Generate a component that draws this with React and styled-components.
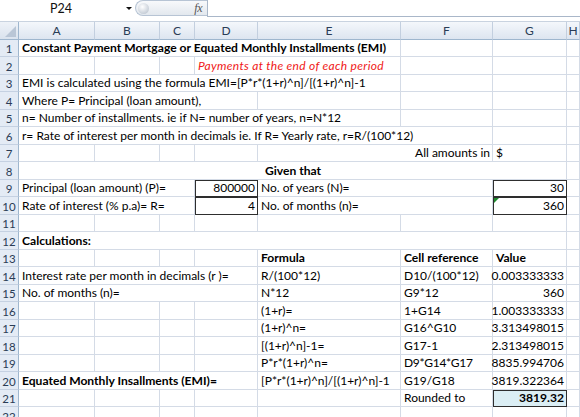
import React from "react";
import styled, { createGlobalStyle, css } from "styled-components";

const GlobalStyle = createGlobalStyle`
  html, body {
    margin: 0;
    padding: 0;
    background: #ffffff;
  }
  body {
    font-family: Lato, "Liberation Sans", sans-serif;
    overflow: hidden;
  }
`;

const COLS = "19px 76px 65px 35px 63px 143px 92px 74px 1fr";
const LETTERS = ["A", "B", "C", "D", "E", "F", "G", "H"];

const Window = styled.div`
  width: 580px;
  height: 417px;
  overflow: hidden;
  background: #fff;
`;

const TopBar = styled.div`
  display: flex;
  align-items: flex-start;
  height: 21px;
  background: #fff;
`;

const NameBox = styled.div`
  width: 122px;
  height: 17px;
  display: flex;
  align-items: center;
  justify-content: center;
  font-size: 12.5px;
  color: #111;
`;

const DropArrow = styled.div`
  width: 13px;
  height: 17px;
  display: flex;
  align-items: center;
  justify-content: center;
  &::after {
    content: "";
    border-left: 3px solid transparent;
    border-right: 3px solid transparent;
    border-top: 3px solid #111;
  }
`;

const FxPill = styled.div`
  width: 72px;
  height: 16px;
  box-sizing: border-box;
  display: flex;
  align-items: center;
  justify-content: space-between;
  padding: 0 5px 0 2px;
  border: 1px solid #b7c4d4;
  border-right: none;
  border-radius: 9px 0 0 9px;
  background: linear-gradient(#f8f9fb, #e3e8ee);
`;

const PillKnob = styled.div`
  width: 11px;
  height: 11px;
  border-radius: 50%;
  background: radial-gradient(circle at 40% 35%, #ffffff, #c9d0d9 70%, #aab3bf);
`;

const FxLabel = styled.span`
  font-family: "Liberation Serif", serif;
  font-style: italic;
  font-size: 12px;
  color: #555;
  letter-spacing: -0.5px;
`;

const FormulaInput = styled.div`
  flex: 1;
  height: 17px;
  box-sizing: border-box;
  border-left: 1px solid #a9b7c9;
  border-bottom: 1px solid #a9b7c9;
  background: #fff;
`;

const Grid = styled.div`
  display: flex;
  flex-direction: column;
`;

const Row = styled.div`
  display: grid;
  grid-template-columns: ${COLS};
  height: ${(p) => p.$h}px;
`;

const HeadRow = styled(Row)`
  border-top: 1px solid #c9d3e0;
  box-sizing: border-box;
`;

const Corner = styled.div`
  position: relative;
  background: linear-gradient(#eef2f8, #dae3ee);
  border-right: 1px solid #9eb6ce;
  border-bottom: 1px solid #9eb6ce;
  &::after {
    content: "";
    position: absolute;
    right: 2px;
    bottom: 2px;
    border-left: 11px solid transparent;
    border-bottom: 11px solid #b9c6d6;
  }
`;

const ColHead = styled.div`
  display: flex;
  align-items: center;
  justify-content: center;
  background: linear-gradient(#f4f7fb, #dde5f0);
  border-right: 1px solid #c3cfdf;
  border-bottom: 1px solid #9eb6ce;
  font-size: 12px;
  color: #2a3c56;
`;

const RowHead = styled.div`
  display: flex;
  align-items: flex-end;
  justify-content: center;
  padding-bottom: 1px;
  box-sizing: border-box;
  background: #e4ebf5;
  border-right: 1px solid #9eb6ce;
  border-bottom: 1px solid #c5d1e2;
  font-size: 11.5px;
  color: #2a3c56;
`;

const Cell = styled.div`
  grid-column: span ${(p) => p.$span || 1};
  display: flex;
  align-items: flex-end;
  justify-content: ${(p) =>
    p.$align === "right" ? "flex-end" : p.$align === "center" ? "center" : "flex-start"};
  box-sizing: border-box;
  padding: 0 2px 1px 3px;
  border-right: 1px solid #d4dbe6;
  border-bottom: 1px solid #d4dbe6;
  font-size: ${(p) => (p.$bold ? "12.1px" : "12px")};
  line-height: 15px;
  white-space: nowrap;
  overflow: visible;
  color: ${(p) => (p.$red ? "#f01818" : "#000")};
  font-weight: ${(p) => (p.$bold ? 700 : 400)};
  font-style: ${(p) => (p.$italic ? "italic" : "normal")};
  letter-spacing: ${(p) => (p.$italic ? "0.3px" : "0")};
  background: ${(p) => (p.$fill ? "#dbeef4" : "transparent")};
  position: relative;
  ${(p) =>
    p.$box &&
    css`
      outline: 1px solid #2e2e2e;
      outline-offset: -1px;
      z-index: 1;
    `}
`;

const Flag = styled.span`
  position: absolute;
  top: 1px;
  left: 1px;
  border-top: 5px solid #1e8a2e;
  border-right: 5px solid transparent;
`;

const Tight = styled.span`
  letter-spacing: -0.3px;
`;

const rows = {
  1: [[1, 5, "Constant Payment Mortgage or Equated Monthly Installments (EMI)", { bold: 1 }]],
  2: [[4, 2, "Payments at the end of each period", { italic: 1, red: 1 }]],
  3: [[1, 5, "EMI is calculated using the formula EMI=[P*r*(1+r)^n]/[(1+r)^n]-1"]],
  4: [[1, 4, "Where P= Principal (loan amount),"]],
  5: [[1, 5, "n= Number of installments. ie if N= number of years, n=N*12"]],
  6: [[1, 6, "r= Rate of interest per month in decimals ie. If R= Yearly rate, r=R/(100*12)"]],
  7: [
    [5, 2, "All amounts in", { align: "right" }],
    [7, 1, "$"],
  ],
  8: [[1, 7, "Given that", { bold: 1, align: "center" }]],
  9: [
    [1, 3, "Principal (loan amount) (P)="],
    [4, 1, "800000", { align: "right", box: 1 }],
    [5, 2, "No. of years (N)="],
    [7, 1, "30", { align: "right", box: 1 }],
  ],
  10: [
    [1, 3, "Rate of interest (% p.a)= R="],
    [4, 1, "4", { align: "right", box: 1 }],
    [5, 2, "No. of months (n)="],
    [7, 1, "360", { align: "right", box: 1, flag: 1 }],
  ],
  12: [[1, 7, "Calculations:", { bold: 1 }]],
  13: [
    [5, 1, "Formula", { bold: 1 }],
    [6, 1, "Cell reference", { bold: 1 }],
    [7, 1, "Value", { bold: 1 }],
  ],
  14: [
    [1, 4, "Interest rate per month in decimals (r )="],
    [5, 1, "R/(100*12)"],
    [6, 1, "D10/(100*12)"],
    [7, 1, "0.003333333", { align: "right" }],
  ],
  15: [
    [1, 4, "No. of months (n)="],
    [5, 1, "N*12"],
    [6, 1, "G9*12"],
    [7, 1, "360", { align: "right" }],
  ],
  16: [
    [5, 1, "(1+r)="],
    [6, 1, "1+G14"],
    [7, 1, "1.003333333", { align: "right" }],
  ],
  17: [
    [5, 1, "(1+r)^n="],
    [6, 1, "G16^G10"],
    [7, 1, "3.313498015", { align: "right" }],
  ],
  18: [
    [5, 1, "[(1+r)^n]-1="],
    [6, 1, "G17-1"],
    [7, 1, "2.313498015", { align: "right" }],
  ],
  19: [
    [5, 1, "P*r*(1+r)^n="],
    [6, 1, "D9*G14*G17", { tight: 1 }],
    [7, 1, "8835.994706", { align: "right" }],
  ],
  20: [
    [1, 4, "Equated Monthly Insallments (EMI)=", { bold: 1 }],
    [5, 1, "[P*r*(1+r)^n]/[(1+r)^n]-1"],
    [6, 1, "G19/G18"],
    [7, 1, "3819.322364", { align: "right" }],
  ],
  21: [
    [6, 1, "Rounded to"],
    [7, 1, "3819.32", { align: "right", bold: 1, box: 1, fill: 1 }],
  ],
};

function buildCells(n) {
  const given = rows[n] || [];
  const out = [];
  let col = 1;
  while (col <= 8) {
    const hit = given.find((g) => g[0] === col);
    if (hit) {
      const [, span, text, o = {}] = hit;
      out.push(
        <Cell
          key={col}
          $span={span}
          $align={o.align}
          $bold={o.bold}
          $italic={o.italic}
          $red={o.red}
          $box={o.box}
          $fill={o.fill}
        >
          {o.flag && <Flag />}
          {o.tight ? <Tight>{text}</Tight> : text}
        </Cell>
      );
      col += span;
    } else {
      out.push(<Cell key={col} />);
      col += 1;
    }
  }
  return out;
}

const rowHeight = (n) => (n % 2 === 1 ? 17 : 18);

export default function App() {
  const nums = Array.from({ length: 22 }, (_, i) => i + 1);
  return (
    <Window>
      <GlobalStyle />
      <TopBar>
        <NameBox>P24</NameBox>
        <DropArrow />
        <FxPill>
          <PillKnob />
          <FxLabel>fx</FxLabel>
        </FxPill>
        <FormulaInput />
      </TopBar>
      <Grid>
        <HeadRow $h={19}>
          <Corner />
          {LETTERS.map((l) => (
            <ColHead key={l}>{l}</ColHead>
          ))}
        </HeadRow>
        {nums.map((n) => (
          <Row key={n} $h={rowHeight(n)}>
            <RowHead>{n}</RowHead>
            {buildCells(n)}
          </Row>
        ))}
      </Grid>
    </Window>
  );
}
